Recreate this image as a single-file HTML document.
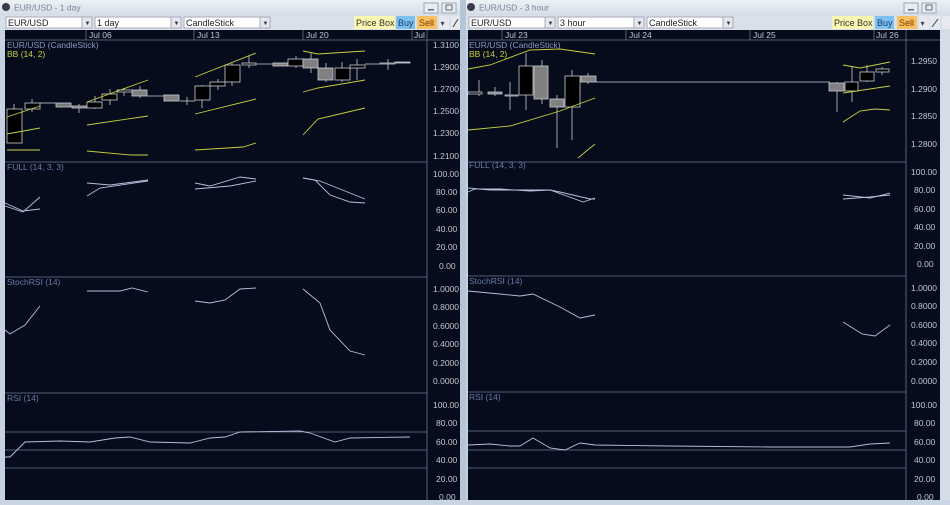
<!DOCTYPE html>
<html><head><meta charset="utf-8"><style>
body{margin:0;width:950px;height:500px;overflow:hidden;background:#c9d5e3;font-family:"Liberation Sans",sans-serif}
</style></head><body>
<svg width="950" height="500" xmlns="http://www.w3.org/2000/svg" font-family="Liberation Sans, sans-serif">
<defs>
<linearGradient id="tb" x1="0" y1="0" x2="0" y2="1"><stop offset="0" stop-color="#eef2f7"/><stop offset="1" stop-color="#d3dce8"/></linearGradient>
</defs>
<rect width="950" height="500" fill="#c5d1e0"/>
<!-- LEFT WINDOW -->
<rect x="0" y="0" width="463" height="15" fill="url(#tb)"/>
<circle cx="6" cy="7" r="4" fill="#3a3a48"/>
<text x="14" y="10.5" font-size="8.5" fill="#7a8290">EUR/USD - 1 day</text>
<rect x="424" y="3" width="14" height="10" fill="#e8eef4" stroke="#9aa6b6"/><rect x="428" y="9" width="6" height="1.5" fill="#666"/>
<rect x="442" y="3" width="14" height="10" fill="#e8eef4" stroke="#9aa6b6"/><rect x="446" y="5" width="6" height="5" fill="none" stroke="#666"/>
<rect x="0" y="15" width="463" height="15" fill="#d8e0ea"/>
<rect x="6" y="17" width="76" height="11" fill="#fff" stroke="#aab"/><text x="8" y="26" font-size="9" fill="#222">EUR/USD</text>
<rect x="82" y="17" width="10" height="11" fill="#e4e8ee" stroke="#aab"/><text x="84.5" y="25" font-size="6" fill="#333">▼</text>
<rect x="95" y="17" width="76" height="11" fill="#fff" stroke="#aab"/><text x="97" y="26" font-size="9" fill="#222">1 day</text>
<rect x="171" y="17" width="10" height="11" fill="#e4e8ee" stroke="#aab"/><text x="173.5" y="25" font-size="6" fill="#333">▼</text>
<rect x="184" y="17" width="76" height="11" fill="#fff" stroke="#aab"/><text x="186" y="26" font-size="9" fill="#222">CandleStick</text>
<rect x="260" y="17" width="10" height="11" fill="#e4e8ee" stroke="#aab"/><text x="262.5" y="25" font-size="6" fill="#333">▼</text>
<rect x="354" y="16" width="41" height="13" fill="#fbf6b0"/><text x="356" y="26" font-size="9" fill="#333">Price Box</text>
<rect x="396" y="16" width="19" height="13" fill="#7cc0f0"/><text x="398" y="26" font-size="9" fill="#1a3a6a">Buy</text>
<rect x="417" y="16" width="20" height="13" fill="#f8c060"/><text x="419" y="26" font-size="9" fill="#7a3a00">Sell</text>
<rect x="439" y="16" width="10" height="13" fill="#e6eaf0"/><text x="440.5" y="26" font-size="8" fill="#444">▾</text>
<rect x="451" y="16" width="9" height="13" fill="#e6eaf0"/><line x1="453" y1="27" x2="458" y2="19" stroke="#444"/>
<rect x="5" y="30" width="455" height="470" fill="#070c1c"/>
<g stroke="#6a7690" stroke-width="0.8">
<line x1="5" y1="40" x2="460" y2="40"/><line x1="427" y1="30" x2="427" y2="500"/>
<line x1="5" y1="162" x2="427" y2="162"/><line x1="5" y1="277" x2="427" y2="277"/><line x1="5" y1="393" x2="427" y2="393"/>
<line x1="86" y1="30" x2="86" y2="40"/><line x1="194" y1="30" x2="194" y2="40"/><line x1="303" y1="30" x2="303" y2="40"/><line x1="412" y1="30" x2="412" y2="40"/>
<line x1="5" y1="432" x2="427" y2="432"/><line x1="5" y1="450" x2="427" y2="450"/><line x1="5" y1="468" x2="427" y2="468"/>
</g>
<g font-size="8.5" fill="#c0c6d2">
<text x="89" y="38">Jul 06</text><text x="197" y="38">Jul 13</text><text x="306" y="38">Jul 20</text><text x="414" y="38">Jul</text>
<text x="433" y="48">1.3100</text><text x="433" y="70">1.2900</text><text x="433" y="92">1.2700</text><text x="433" y="114">1.2500</text><text x="433" y="136">1.2300</text><text x="433" y="159">1.2100</text>
<text x="433" y="177">100.00</text><text x="436" y="195">80.00</text><text x="436" y="213">60.00</text><text x="436" y="232">40.00</text><text x="436" y="250">20.00</text><text x="439" y="269">0.00</text>
<text x="433" y="292">1.0000</text><text x="433" y="310">0.8000</text><text x="433" y="329">0.6000</text><text x="433" y="347">0.4000</text><text x="433" y="366">0.2000</text><text x="433" y="384">0.0000</text>
<text x="433" y="408">100.00</text><text x="436" y="426">80.00</text><text x="436" y="445">60.00</text><text x="436" y="463">40.00</text><text x="436" y="482">20.00</text><text x="439" y="500">0.00</text>
</g>
<text x="7" y="48" font-size="8.5" fill="#8a96c0">EUR/USD (CandleStick)</text>
<text x="7" y="57" font-size="8.5" fill="#c8d040">BB (14, 2)</text>
<text x="7" y="170" font-size="8.5" fill="#6a7aa8">FULL (14, 3, 3)</text>
<text x="7" y="285" font-size="8.5" fill="#6a7aa8">StochRSI (14)</text>
<text x="7" y="401" font-size="8.5" fill="#6a7aa8">RSI (14)</text>
<!-- candles left -->
<g stroke="#c8ccd4" stroke-width="0.8">
<line x1="14" y1="104" x2="14" y2="143"/><line x1="32" y1="99" x2="32" y2="112"/><line x1="40" y1="103" x2="56" y2="103"/>
<line x1="79" y1="104" x2="79" y2="113"/><line x1="95" y1="96" x2="95" y2="109"/><line x1="110" y1="89" x2="110" y2="105"/><line x1="124" y1="88" x2="124" y2="96"/><line x1="140" y1="86" x2="140" y2="98"/><line x1="147" y1="96" x2="164" y2="96"/><line x1="180" y1="101" x2="195" y2="101"/><line x1="187" y1="97" x2="187" y2="105"/>
<line x1="202" y1="85" x2="202" y2="108"/><line x1="218" y1="79" x2="218" y2="90"/><line x1="232" y1="63" x2="232" y2="86"/><line x1="249" y1="56" x2="249" y2="68"/><line x1="256" y1="64" x2="273" y2="64"/><line x1="296" y1="56" x2="296" y2="68"/><line x1="311" y1="53" x2="311" y2="73"/><line x1="326" y1="63" x2="326" y2="82"/><line x1="342" y1="62" x2="342" y2="82"/><line x1="357" y1="59" x2="357" y2="80"/><line x1="365" y1="64" x2="380" y2="64"/><line x1="388" y1="59" x2="388" y2="70"/>
</g>
<g stroke="#c8ccd4" stroke-width="0.8">
<rect x="7" y="109" width="15" height="34" fill="#000"/><rect x="25" y="103" width="15" height="6" fill="#000"/>
<rect x="56" y="103" width="15" height="4" fill="#777"/><rect x="72" y="106" width="15" height="2" fill="#777"/>
<rect x="87" y="102" width="15" height="6" fill="#000"/><rect x="102" y="94" width="15" height="6" fill="#000"/>
<rect x="117" y="90" width="15" height="2" fill="#000"/><rect x="132" y="90" width="15" height="6" fill="#808080"/>
<rect x="164" y="95" width="15" height="6" fill="#808080"/>
<rect x="195" y="86" width="15" height="14" fill="#000"/><rect x="210" y="82" width="15" height="4" fill="#000"/><rect x="225" y="65" width="15" height="17" fill="#000"/>
<rect x="242" y="63" width="14" height="2" fill="#000"/><rect x="273" y="63" width="15" height="3" fill="#808080"/>
<rect x="288" y="59" width="15" height="7" fill="#000"/><rect x="303" y="59" width="15" height="9" fill="#808080"/>
<rect x="318" y="68" width="15" height="12" fill="#808080"/><rect x="335" y="68" width="15" height="12" fill="#000"/>
<rect x="350" y="65" width="15" height="3" fill="#000"/><rect x="380" y="63" width="15" height="1" fill="#000"/>
<rect x="395" y="62" width="15" height="1" fill="#aaa"/>
</g>
<g fill="none" stroke="#c8d040" stroke-width="0.9">
<polyline points="7,117 40,106"/><polyline points="87,102 148,80"/><polyline points="195,77 256,53"/><polyline points="303,51 318,54 365,51"/>
<polyline points="7,134 40,128"/><polyline points="87,125 148,116"/><polyline points="195,114 256,99"/><polyline points="303,92 318,88 365,80"/>
<polyline points="7,150 40,150"/><polyline points="87,151 130,155 148,155"/><polyline points="195,150 243,147 256,143"/><polyline points="303,135 318,119 365,108"/>
</g>
<g fill="none" stroke="#b8c0dc" stroke-width="0.9">
<polyline points="5,206 23,212 40,197"/><polyline points="5,203 23,211 40,209"/>
<polyline points="87,196 100,188 148,181"/><polyline points="87,183 110,185 148,180"/>
<polyline points="195,183 210,186 240,177 256,179"/><polyline points="195,189 230,186 256,181"/>
<polyline points="303,178 320,181 365,199"/><polyline points="303,178 315,180 330,195 350,202 365,203"/>
<polyline points="5,330 10,334 25,325 40,306"/>
<polyline points="87,291 120,291 132,288 148,292"/>
<polyline points="195,301 210,303 225,300 240,289 256,288"/>
<polyline points="303,289 320,303 330,330 350,351 365,355"/>
<polyline points="5,457 10,457 25,442 60,441 90,442 115,438 130,437 150,442 190,443 210,438 225,437 240,432 300,431 310,433 335,442 350,438 410,437"/>
</g>
<!-- divider strip -->
<rect x="460" y="0" width="6" height="500" fill="#b7c5d8"/>
<!-- RIGHT WINDOW -->
<rect x="466" y="0" width="484" height="15" fill="url(#tb)"/>
<circle cx="471" cy="7" r="4" fill="#3a3a48"/>
<text x="479" y="10.5" font-size="8.5" fill="#7a8290">EUR/USD - 3 hour</text>
<rect x="904" y="3" width="14" height="10" fill="#e8eef4" stroke="#9aa6b6"/><rect x="908" y="9" width="6" height="1.5" fill="#666"/>
<rect x="922" y="3" width="14" height="10" fill="#e8eef4" stroke="#9aa6b6"/><rect x="926" y="5" width="6" height="5" fill="none" stroke="#666"/>
<rect x="466" y="15" width="484" height="15" fill="#d8e0ea"/>
<rect x="469" y="17" width="76" height="11" fill="#fff" stroke="#aab"/><text x="471" y="26" font-size="9" fill="#222">EUR/USD</text>
<rect x="545" y="17" width="10" height="11" fill="#e4e8ee" stroke="#aab"/><text x="547.5" y="25" font-size="6" fill="#333">▼</text>
<rect x="558" y="17" width="76" height="11" fill="#fff" stroke="#aab"/><text x="560" y="26" font-size="9" fill="#222">3 hour</text>
<rect x="634" y="17" width="10" height="11" fill="#e4e8ee" stroke="#aab"/><text x="636.5" y="25" font-size="6" fill="#333">▼</text>
<rect x="647" y="17" width="76" height="11" fill="#fff" stroke="#aab"/><text x="649" y="26" font-size="9" fill="#222">CandleStick</text>
<rect x="723" y="17" width="10" height="11" fill="#e4e8ee" stroke="#aab"/><text x="725.5" y="25" font-size="6" fill="#333">▼</text>
<rect x="832" y="16" width="41" height="13" fill="#fbf6b0"/><text x="834" y="26" font-size="9" fill="#333">Price Box</text>
<rect x="875" y="16" width="19" height="13" fill="#7cc0f0"/><text x="877" y="26" font-size="9" fill="#1a3a6a">Buy</text>
<rect x="897" y="16" width="20" height="13" fill="#f8c060"/><text x="899" y="26" font-size="9" fill="#7a3a00">Sell</text>
<rect x="919" y="16" width="10" height="13" fill="#e6eaf0"/><text x="920.5" y="26" font-size="8" fill="#444">▾</text>
<rect x="930" y="16" width="10" height="13" fill="#e6eaf0"/><line x1="932" y1="27" x2="938" y2="19" stroke="#444"/>
<rect x="942" y="16" width="8" height="13" fill="#e6eaf0"/>
<rect x="468" y="30" width="472" height="470" fill="#070c1c"/>
<rect x="940" y="30" width="10" height="470" fill="#d4dce6"/>
<g stroke="#6a7690" stroke-width="0.8">
<line x1="468" y1="40" x2="940" y2="40"/><line x1="906" y1="30" x2="906" y2="500"/>
<line x1="468" y1="162" x2="906" y2="162"/><line x1="468" y1="276" x2="906" y2="276"/><line x1="468" y1="392" x2="906" y2="392"/>
<line x1="502" y1="30" x2="502" y2="40"/><line x1="626" y1="30" x2="626" y2="40"/><line x1="750" y1="30" x2="750" y2="40"/><line x1="874" y1="30" x2="874" y2="40"/>
<line x1="468" y1="431" x2="906" y2="431"/><line x1="468" y1="450" x2="906" y2="450"/><line x1="468" y1="468" x2="906" y2="468"/>
</g>
<g font-size="8.5" fill="#c0c6d2">
<text x="505" y="38">Jul 23</text><text x="629" y="38">Jul 24</text><text x="753" y="38">Jul 25</text><text x="876" y="38">Jul 26</text>
<text x="911" y="64">1.2950</text><text x="911" y="92">1.2900</text><text x="911" y="119">1.2850</text><text x="911" y="147">1.2800</text>
<text x="911" y="175">100.00</text><text x="914" y="193">80.00</text><text x="914" y="212">60.00</text><text x="914" y="230">40.00</text><text x="914" y="249">20.00</text><text x="917" y="267">0.00</text>
<text x="911" y="291">1.0000</text><text x="911" y="309">0.8000</text><text x="911" y="328">0.6000</text><text x="911" y="346">0.4000</text><text x="911" y="365">0.2000</text><text x="911" y="384">0.0000</text>
<text x="911" y="408">100.00</text><text x="914" y="426">80.00</text><text x="914" y="445">60.00</text><text x="914" y="463">40.00</text><text x="914" y="482">20.00</text><text x="917" y="500">0.00</text>
</g>
<text x="469" y="48" font-size="8.5" fill="#8a96c0">EUR/USD (CandleStick)</text>
<text x="469" y="57" font-size="8.5" fill="#c8d040">BB (14, 2)</text>
<text x="469" y="168" font-size="8.5" fill="#6a7aa8">FULL (14, 3, 3)</text>
<text x="469" y="284" font-size="8.5" fill="#6a7aa8">StochRSI (14)</text>
<text x="469" y="400" font-size="8.5" fill="#6a7aa8">RSI (14)</text>
<g stroke="#c8ccd4" stroke-width="0.8">
<line x1="479" y1="80" x2="479" y2="96"/><line x1="495" y1="87" x2="495" y2="96"/><line x1="510" y1="82" x2="510" y2="110"/>
<line x1="526" y1="53" x2="526" y2="110"/><line x1="542" y1="60" x2="542" y2="104"/><line x1="557" y1="95" x2="557" y2="148"/><line x1="572" y1="70" x2="572" y2="140"/><line x1="588" y1="73" x2="588" y2="84"/>
<line x1="596" y1="82" x2="830" y2="82"/><line x1="837" y1="82" x2="837" y2="112"/><line x1="852" y1="66" x2="852" y2="102"/><line x1="867" y1="65" x2="867" y2="82"/><line x1="882" y1="67" x2="882" y2="75"/>
</g>
<g stroke="#c8ccd4" stroke-width="0.8">
<rect x="468" y="92" width="14" height="2" fill="#000"/><rect x="488" y="92" width="14" height="2" fill="#808080"/><rect x="505" y="95" width="13" height="1" fill="#000"/>
<rect x="519" y="66" width="14" height="29" fill="#000"/><rect x="534" y="66" width="14" height="33" fill="#808080"/>
<rect x="550" y="99" width="14" height="8" fill="#808080"/><rect x="565" y="76" width="15" height="31" fill="#000"/>
<rect x="581" y="76" width="15" height="6" fill="#808080"/>
<rect x="829" y="83" width="15" height="8" fill="#808080"/><rect x="845" y="82" width="13" height="9" fill="#000"/>
<rect x="860" y="72" width="14" height="9" fill="#000"/><rect x="876" y="69" width="13" height="3" fill="#000"/>
</g>
<g fill="none" stroke="#c8d040" stroke-width="0.9">
<polyline points="468,69 490,65 530,50 560,49 595,54"/><polyline points="843,65 860,68 890,62"/>
<polyline points="468,130 510,126 560,111 595,98"/><polyline points="843,93 890,86"/>
<polyline points="578,158 595,144"/><polyline points="843,122 860,111 875,109 890,110"/>
</g>
<g fill="none" stroke="#b8c0dc" stroke-width="0.9">
<polyline points="468,192 475,189 500,189 530,191 550,190 560,192 590,199 595,199"/>
<polyline points="468,188 490,190 550,190 575,199 583,202 595,198"/>
<polyline points="843,195 870,198 890,193"/><polyline points="843,199 870,197 890,195"/>
<polyline points="468,291 500,294 520,296 533,294 560,307 580,318 595,315"/>
<polyline points="843,322 862,334 875,336 890,325"/>
<polyline points="468,445 490,444 510,446 520,446 533,438 550,448 565,450 580,443 595,445 670,446 770,447 850,447 870,444 890,443"/>
</g>
</svg>
</body></html>
